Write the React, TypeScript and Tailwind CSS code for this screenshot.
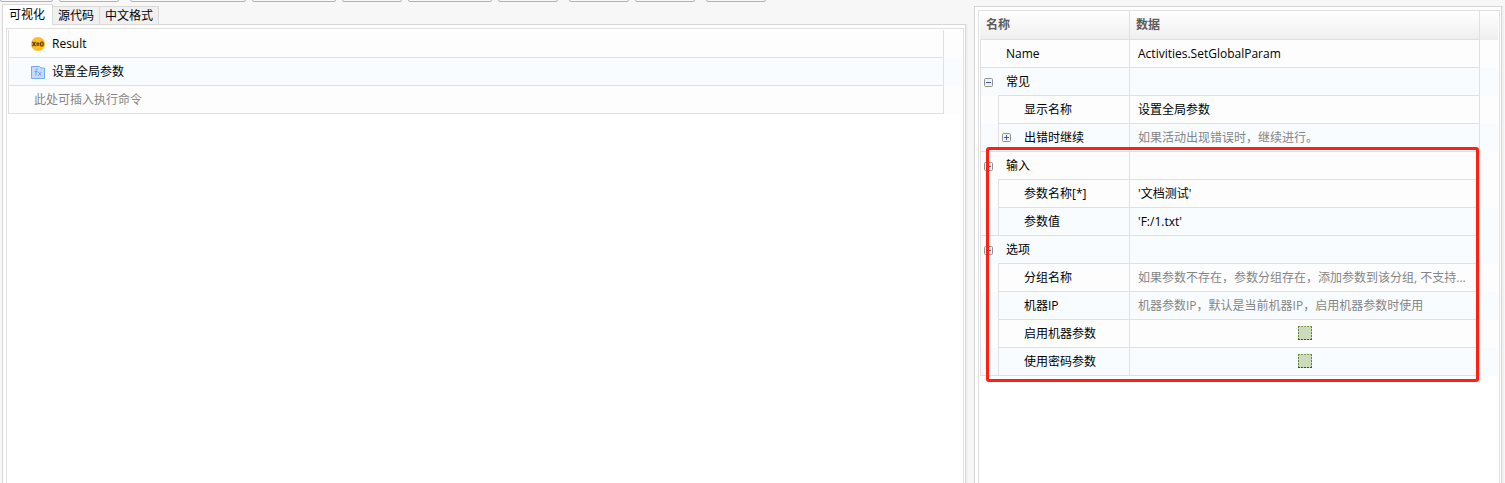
import { useState } from "react";
import type { ReactNode } from "react";

const toolbarButtons = [
  "w-[53px] ml-0",
  "w-[60px] ml-[6px]",
  "w-[116px] ml-[11px]",
  "w-[84px] ml-[6px]",
  "w-[60px] ml-[6px]",
  "w-[84px] ml-[6px]",
  "w-[60px] ml-[6px]",
  "w-[60px] ml-[11px]",
  "w-[60px] ml-[6px]",
  "w-[60px] ml-[11px]",
];

const tabs = ["可视化", "源代码", "中文格式"];

type Row = {
  kind: "top" | "group" | "child";
  name: string;
  value?: string;
  hint?: boolean;
  check?: string;
  expandable?: boolean;
  tinted?: boolean;
  last?: boolean;
};

const rows: Row[] = [
  { kind: "top", name: "Name", value: "Activities.SetGlobalParam" },
  { kind: "group", name: "常见", tinted: true },
  { kind: "child", name: "显示名称", value: "设置全局参数" },
  { kind: "child", name: "出错时继续", value: "如果活动出现错误时，继续进行。", hint: true, expandable: true, tinted: true, last: true },
  { kind: "group", name: "输入" },
  { kind: "child", name: "参数名称[*]", value: "'文档测试'" },
  { kind: "child", name: "参数值", value: "'F:/1.txt'", tinted: true, last: true },
  { kind: "group", name: "选项", tinted: true },
  { kind: "child", name: "分组名称", value: "如果参数不存在，参数分组存在，添加参数到该分组, 不支持...", hint: true },
  { kind: "child", name: "机器IP", value: "机器参数IP，默认是当前机器IP，启用机器参数时使用", hint: true, tinted: true },
  { kind: "child", name: "启用机器参数", check: "use-machine" },
  { kind: "child", name: "使用密码参数", check: "use-password", tinted: true, last: true },
];

function Toggle({ open, label }: { open: boolean; label: string }) {
  return (
    <button type="button" aria-label={label} aria-expanded={open} className="block h-[9px] w-[9px]">
      <svg viewBox="0 0 9 9" className="block h-[9px] w-[9px]">
        <rect x="0.5" y="0.5" width="8" height="8" rx="1" fill="#f2f2f2" stroke="#919191" />
        <path d="M2 4.5h5" stroke="#3f5aa8" />
        {!open && <path d="M4.5 2v5" stroke="#3f5aa8" />}
      </svg>
    </button>
  );
}

function Panel({ children }: { children: ReactNode }) {
  return (
    <div className="min-h-0 flex-1 border border-b-0 border-[#d6d6d6] bg-white pt-[3px] pr-px pl-[3px] shadow-[2px_0_0_#f0f0f0]">
      <div className="h-full border border-b-0 border-[#e0e0e0]">{children}</div>
    </div>
  );
}

function VariableIcon() {
  return (
    <svg viewBox="0 0 14 14" className="h-[14px] w-[14px]">
      <circle cx="7" cy="7" r="7" fill="#ffbd22" />
      <path d="M1.4 4.8l3.2 4.4M4.6 4.8L1.4 9.2M5.4 6.2h3M5.4 8h3" stroke="#6b4200" strokeWidth="1.4" />
      <rect x="9.6" y="5.2" width="2.5" height="3.7" rx="1" fill="none" stroke="#6b4200" strokeWidth="1.3" />
    </svg>
  );
}

function FunctionIcon() {
  return (
    <svg viewBox="0 0 14 14" className="h-[14px] w-[14px]">
      <path d="M0.5 1.5h8l1.5 1.5h3.5v10.5h-13z" fill="#c3dcff" stroke="#79a9fb" />
      <path d="M6.8 4.2c-1.4-.5-1.8.2-1.8 1.4v5M3.7 6.5h2.8M7.3 7l3 3.8M10.3 7l-3 3.8" fill="none" stroke="#6d9ffa" />
    </svg>
  );
}

function StepTable() {
  const line = "h-[28px] border-b border-[#e0e0e0] border-l border-r p-0";
  return (
    <table className="mt-px ml-px w-[calc(100%-2px)] table-fixed border-separate border-spacing-0">
      <colgroup>
        <col />
        <col className="w-[18px]" />
      </colgroup>
      <tbody>
        <tr className="bg-[#fdfdfd]">
          <td className={line}>
            <div className="flex items-center gap-[7px] pl-[22px]">
              <VariableIcon />
              <span>Result</span>
            </div>
          </td>
          <td className="p-0" />
        </tr>
        <tr className="bg-[#f8fcff]">
          <td className={line}>
            <div className="flex items-center gap-[7px] pl-[22px]">
              <FunctionIcon />
              <span>设置全局参数</span>
            </div>
          </td>
          <td className="p-0" />
        </tr>
        <tr className="bg-[#fdfdfd]">
          <td className={line}>
            <div className="pl-[25px] text-[#858585]">此处可插入执行命令</div>
          </td>
          <td className="p-0" />
        </tr>
      </tbody>
    </table>
  );
}

function CheckCell({ id }: { id: string }) {
  const [checked, setChecked] = useState(false);
  return (
    <div className="relative mx-auto mb-px h-[14px] w-[14px]">
      <input
        id={id}
        type="checkbox"
        checked={checked}
        onChange={(e) => setChecked(e.target.checked)}
        className="block h-[14px] w-[14px] appearance-none bg-[#cddbbd] checked:bg-[#8dad5f]"
      />
      <svg viewBox="0 0 14 14" className="pointer-events-none absolute inset-0 h-[14px] w-[14px]" fill="none" strokeDasharray="2 1">
        <path d="M0 0.5h14" stroke="#82a453" />
        <path d="M0.5 0v14M13.5 0v14" stroke="#65843b" />
        <path d="M0 13.5h14" stroke="#3f5a17" />
      </svg>
    </div>
  );
}

function PropertyRow({ row }: { row: Row }) {
  const child = row.kind === "child";
  return (
    <tr className={row.tinted ? "bg-[#f8fcff]" : "bg-[#fdfdfd]"}>
      <td
        className={
          "h-[28px] border-l border-[#e0e0e0] p-0 pl-[3px] " +
          (row.last || row.kind === "top" ? "border-b" : "")
        }
      >
        {row.kind === "group" && <Toggle open label={row.name} />}
      </td>
      <td className={"border-b border-[#e0e0e0] p-0 " + (child ? "border-l" : "")}>
        <div className={"flex items-center " + (child ? "pl-[3px]" : "pl-[8px]")}>
          {child && <div className="w-[22px] shrink-0">{row.expandable && <Toggle open={false} label={row.name} />}</div>}
          {row.check ? <label htmlFor={row.check}>{row.name}</label> : <span>{row.name}</span>}
        </div>
      </td>
      <td className="border-r border-b border-l border-[#e0e0e0] p-0">
        {row.check ? (
          <CheckCell id={row.check} />
        ) : (
          <div className={"truncate pr-[8px] pl-[8px] " + (row.hint ? "text-[#858585]" : "")}>{row.value}</div>
        )}
      </td>
      <td className="p-0" />
    </tr>
  );
}

function PropertyTable() {
  const head = "h-[29px] border-b border-[#e0e0e0] p-0 text-left font-semibold text-[#5c5c5c]";
  return (
    <div className="relative ml-px w-[calc(100%-2px)]">
      <table className="w-full table-fixed border-separate border-spacing-0">
        <colgroup>
          <col className="w-[18px]" />
          <col className="w-[131px]" />
          <col />
          <col className="w-[18px]" />
        </colgroup>
        <thead>
          <tr className="bg-linear-to-b from-white to-[#eeeeee]">
            <th colSpan={2} className={head + " pl-[6px]"}>名称</th>
            <th className={head + " border-r border-l pl-[6px]"}>数据</th>
            <td className="p-0" />
          </tr>
        </thead>
        <tbody>
          {rows.map((row) => (
            <PropertyRow key={row.name} row={row} />
          ))}
        </tbody>
      </table>
      <div className="pointer-events-none absolute top-[136px] right-[19px] -bottom-[6px] left-[6px] rounded-[3px] border-3 border-[#ff2014]" />
    </div>
  );
}

export default function App() {
  const [active, setActive] = useState(0);
  return (
    <div className="flex h-screen flex-col overflow-hidden bg-[#f7f7f7] font-['Open_Sans','Noto_Sans_CJK_SC',sans-serif] text-[12px] leading-[18px] text-black">
      <div className="flex h-[2px] shrink-0 items-end overflow-hidden">
        {toolbarButtons.map((size, i) => (
          <button
            key={i}
            type="button"
            aria-label={"工具 " + (i + 1)}
            className={size + " h-[24px] shrink-0 rounded-[2px] border border-[#adb2bb] bg-[#f9f9f9]"}
          />
        ))}
      </div>
      <main className="flex min-h-0 flex-1 gap-[8px] pr-[3px] pl-[2px]">
        <section className="flex min-w-0 flex-1 flex-col pt-[2px]">
          <div role="tablist" className="z-10 -mb-px flex h-[21px] shrink-0 items-end">
            {tabs.map((tab, i) => (
              <button
                key={tab}
                type="button"
                role="tab"
                aria-selected={i === active}
                onClick={() => setActive(i)}
                className={
                  i === active
                    ? "h-[21px] border border-b-0 border-[#d9d9d9] bg-white pr-[7px] pl-[6px]"
                    : "h-[19px] border border-l-0 border-[#d9d9d9] bg-[#f0f0f0] px-[5px]"
                }
              >
                {tab}
              </button>
            ))}
          </div>
          <Panel>
            <StepTable />
          </Panel>
        </section>
        <section className="flex w-[528px] shrink-0 flex-col pt-[4px]">
          <Panel>
            <PropertyTable />
          </Panel>
        </section>
      </main>
    </div>
  );
}
